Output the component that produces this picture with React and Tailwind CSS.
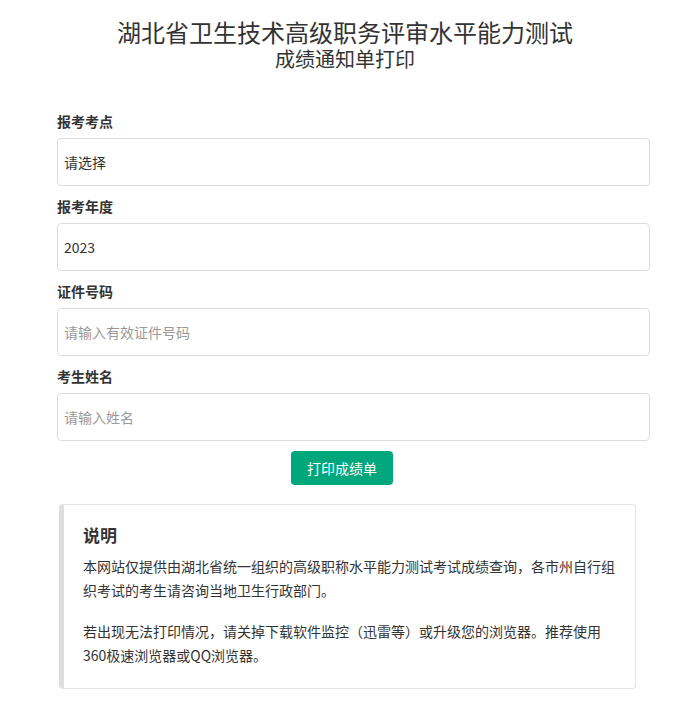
import { useState } from "react";

const font = {
  fontFamily: '"Noto Sans CJK SC", "Liberation Sans", sans-serif',
};

function Field({ label, children }) {
  return (
    <div className="mb-[10px]">
      <div className="text-[14px] leading-[20px] font-bold text-[#333] mb-[7px]">
        {label}
      </div>
      {children}
    </div>
  );
}

const inputCls =
  "w-full h-[48px] border border-[#dcdcdc] rounded-[4px] px-[6px] text-[14px] text-[#333] bg-white outline-none placeholder:text-[#999]";

function App() {
  const [site, setSite] = useState("");
  const [year, setYear] = useState("2023");
  const [idNo, setIdNo] = useState("");
  const [name, setName] = useState("");

  return (
    <div className="min-h-screen bg-white text-[#333]" style={font}>
      <div className="pt-[17px] text-center">
        <h1 className="text-[24px] leading-[30px] font-normal text-[#333]">
          湖北省卫生技术高级职务评审水平能力测试
        </h1>
        <h2 className="text-[20px] leading-[24px] font-normal text-[#333]">
          成绩通知单打印
        </h2>
      </div>

      <form
        className="ml-[57px] w-[593px] mt-[40px]"
        onSubmit={(e) => e.preventDefault()}
      >
        <Field label="报考考点">
          <select
            value={site}
            onChange={(e) => setSite(e.target.value)}
            className={`${inputCls} appearance-none`}
          >
            <option value="">请选择</option>
          </select>
        </Field>
        <Field label="报考年度">
          <select
            value={year}
            onChange={(e) => setYear(e.target.value)}
            className={`${inputCls} appearance-none`}
          >
            <option value="2023">2023</option>
          </select>
        </Field>
        <Field label="证件号码">
          <input
            value={idNo}
            onChange={(e) => setIdNo(e.target.value)}
            placeholder="请输入有效证件号码"
            className={inputCls}
          />
        </Field>
        <Field label="考生姓名">
          <input
            value={name}
            onChange={(e) => setName(e.target.value)}
            placeholder="请输入姓名"
            className={inputCls}
          />
        </Field>
        <div className="flex">
          <button
            type="submit"
            className="h-[34px] w-[102px] ml-[234px] rounded-[4px] bg-[#00a67c] text-white text-[14px]"
          >
            打印成绩单
          </button>
        </div>
      </form>

      <div className="ml-[59px] w-[577px] mt-[19px] border border-[#e3e3e3] border-l-[5px] border-l-[#dedede] rounded-[4px] pl-[19px] pr-[16px] pt-[18px] pb-[21px]">
        <div className="text-[17px] leading-[24px] font-bold text-[#333]">
          说明
        </div>
        <p className="mt-[7px] text-[14px] leading-[24px] text-[#333]">
          本网站仅提供由湖北省统一组织的高级职称水平能力测试考试成绩查询，各市州自行组织考试的考生请咨询当地卫生行政部门。
        </p>
        <p className="mt-[17px] text-[14px] leading-[24px] text-[#333]">
          若出现无法打印情况，请关掉下载软件监控（迅雷等）或升级您的浏览器。推荐使用360极速浏览器或QQ浏览器。
        </p>
      </div>
    </div>
  );
}

export default App;
